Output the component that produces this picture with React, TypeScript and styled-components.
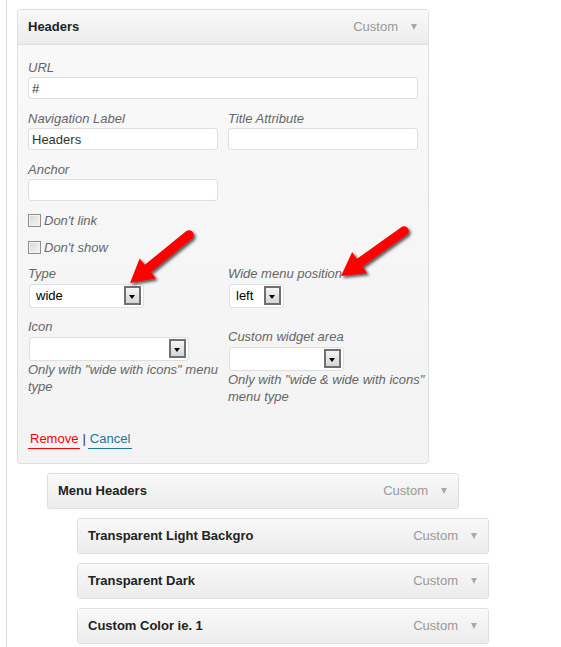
import { createGlobalStyle, styled } from 'styled-components';

const GlobalStyle = createGlobalStyle`
  html, body {
    margin: 0;
    padding: 0;
    background: #fff;
  }
  body {
    font-family: 'Liberation Sans', Arial, sans-serif;
    font-size: 13px;
    color: #333;
  }
`;

type Point = [number, number];

interface ArrowProps {
  tail: Point;
  tip: Point;
}

// red pointer arrow drawn on top of the form, coordinates in page space
const Arrow = ({ tail, tip }: ArrowProps) => {
  const dx = tip[0] - tail[0];
  const dy = tip[1] - tail[1];
  const len = Math.hypot(dx, dy);
  const ux = dx / len;
  const uy = dy / len;
  const headLen = 23;
  const half = 13;
  const bx = tip[0] - ux * headLen;
  const by = tip[1] - uy * headLen;
  const wingA = `${bx - uy * half},${by + ux * half}`;
  const wingB = `${bx + uy * half},${by - ux * half}`;

  return (
    <g filter="url(#arrowShadow)">
      <line
        x1={tail[0]}
        y1={tail[1]}
        x2={bx + ux * 2}
        y2={by + uy * 2}
        stroke="#ff0000"
        strokeWidth={9.5}
        strokeLinecap="round"
      />
      <polygon points={`${tip[0]},${tip[1]} ${wingA} ${wingB}`} fill="#ff0000" />
    </g>
  );
};

interface ItemHeaderProps {
  title: string;
}

const ItemHeader = ({ title }: ItemHeaderProps) => (
  <Header>
    <Title>{title}</Title>
    <ItemType>Custom</ItemType>
    <Toggle />
  </Header>
);

interface SelectProps {
  value?: string;
  width: number;
}

const Select = ({ value, width }: SelectProps) => (
  <SelectBox $width={width}>
    <span>{value}</span>
    <DropButton />
  </SelectBox>
);

const App = () => {
  return (
    <Root>
      <GlobalStyle />
      <Page>
        <Card>
          <ItemHeader title="Headers" />
          <CardBody>
            <Field $width={390}>
              <Label>URL</Label>
              <TextInput $width={390} defaultValue="#" />
            </Field>

            <FieldRow $gap={11}>
              <Field>
                <Label>Navigation Label</Label>
                <TextInput $width={190} defaultValue="Headers" />
              </Field>
              <Field>
                <Label>Title Attribute</Label>
                <TextInput $width={190} />
              </Field>
            </FieldRow>

            <FieldRow $gap={11}>
              <Field>
                <Label>Anchor</Label>
                <TextInput $width={190} />
              </Field>
            </FieldRow>

            <CheckRow $gap={10}>
              <CheckBox />
              <CheckLabel>Don't link</CheckLabel>
            </CheckRow>
            <CheckRow $gap={9}>
              <CheckBox />
              <CheckLabel>Don't show</CheckLabel>
            </CheckRow>

            <FieldRow $gap={9}>
              <Field>
                <Label>Type</Label>
                <Select value="wide" width={115} />
              </Field>
              <Field>
                <Label>Wide menu position</Label>
                <Select value="left" width={55} />
              </Field>
            </FieldRow>

            <FieldRow $gap={10}>
              <Field>
                <Label>Icon</Label>
                <Select width={160} />
                <Help>Only with "wide with icons" menu type</Help>
              </Field>
              <Field $width={200} $offset={10}>
                <Label>Custom widget area</Label>
                <Select width={115} />
                <Help>Only with "wide &amp; wide with icons" menu type</Help>
              </Field>
            </FieldRow>

            <Actions>
              <ActionLink $color="#ff0000">Remove</ActionLink>
              <Separator>|</Separator>
              <ActionLink $color="#21759b">Cancel</ActionLink>
            </Actions>
          </CardBody>
        </Card>

        <Card $depth={1}>
          <ItemHeader title="Menu Headers" />
        </Card>
        <Card $depth={2}>
          <ItemHeader title="Transparent Light Backgro" />
        </Card>
        <Card $depth={2}>
          <ItemHeader title="Transparent Dark" />
        </Card>
        <Card $depth={2}>
          <ItemHeader title="Custom Color ie. 1" />
        </Card>
      </Page>

      <Overlay width={561} height={647}>
        <defs>
          <filter id="arrowShadow" x="-20%" y="-20%" width="150%" height="150%">
            <feDropShadow dx="2" dy="2" stdDeviation="1.4" floodColor="#000" floodOpacity="0.65" />
          </filter>
        </defs>
        <Arrow tail={[189, 235]} tip={[130, 283]} />
        <Arrow tail={[404, 231]} tip={[341, 276]} />
      </Overlay>
    </Root>
  );
};

export default App;

const Root = styled.div`
  position: relative;
  width: 561px;
  height: 647px;
  overflow: hidden;
`;

const Page = styled.div`
  margin-left: 6px;
  border-left: 1px solid #dedede;
  height: 647px;
  box-sizing: border-box;
  padding: 9px 0 0 10px;
`;

const Card = styled.div<{ $depth?: number }>`
  width: 412px;
  box-sizing: border-box;
  margin: 0 0 9px ${({ $depth = 0 }) => $depth * 30}px;
  border: 1px solid #dfdfdf;
  border-radius: 3px;
  background: linear-gradient(#f9f9f9, #f3f3f3);
  overflow: hidden;
`;

const Header = styled.div`
  display: flex;
  align-items: center;
  height: 34px;
  padding: 0 11px 1px 10px;
  box-sizing: border-box;
  background: linear-gradient(#f9f9f9, #ececec);

  & + * {
    border-top: 1px solid #dfdfdf;
  }
`;

const Title = styled.span`
  flex: 1;
  font-weight: bold;
  font-size: 13px;
  color: #222;
  white-space: nowrap;
`;

const ItemType = styled.span`
  font-size: 13px;
  color: #999;
  margin-right: 13px;
`;

const Toggle = styled.span`
  width: 0;
  height: 0;
  border-left: 3.5px solid transparent;
  border-right: 3.5px solid transparent;
  border-top: 6px solid #aaa;
`;

const CardBody = styled.div`
  padding: 14px 10px 14px;
`;

const FieldRow = styled.div<{ $gap: number }>`
  display: flex;
  gap: 10px;
  align-items: flex-start;
  margin-top: ${({ $gap }) => $gap}px;
`;

const Field = styled.div<{ $width?: number; $offset?: number }>`
  display: flex;
  flex-direction: column;
  align-items: flex-start;
  width: ${({ $width = 190 }) => $width}px;
  flex: none;
  margin-top: ${({ $offset = 0 }) => $offset}px;
`;

const Label = styled.label`
  display: block;
  font-style: italic;
  font-size: 13px;
  line-height: 18px;
  color: #666;
`;

const TextInput = styled.input<{ $width: number }>`
  width: ${({ $width }) => $width}px;
  height: 22px;
  box-sizing: border-box;
  border: 1px solid #dfdfdf;
  border-radius: 3px;
  background: #fff;
  padding: 0 3px;
  font-family: 'Liberation Sans', Arial, sans-serif;
  font-size: 13px;
  color: #333;
  outline: none;
`;

const SelectBox = styled.div<{ $width: number }>`
  display: flex;
  align-items: center;
  justify-content: space-between;
  width: ${({ $width }) => $width}px;
  height: 24px;
  box-sizing: border-box;
  margin: 1px 0 0 1px;
  padding: 0 2px 1px 6px;
  border: 1px solid #dfdfdf;
  border-radius: 3px;
  background: #fff;
  font-size: 13px;
  color: #000;
`;

const DropButton = styled.span`
  position: relative;
  width: 17px;
  height: 19px;
  box-sizing: border-box;
  border: 2px solid #707070;
  background: linear-gradient(#f4f4f4, #d6d6d6);

  &::after {
    content: '';
    position: absolute;
    left: 3px;
    top: 7px;
    border-left: 3.5px solid transparent;
    border-right: 3.5px solid transparent;
    border-top: 4px solid #000;
  }
`;

const Help = styled.p`
  margin: 0;
  font-style: italic;
  font-size: 13px;
  line-height: 17px;
  color: #666;
`;

const CheckRow = styled.div<{ $gap: number }>`
  display: flex;
  align-items: center;
  gap: 3px;
  height: 18px;
  margin-top: ${({ $gap }) => $gap}px;
`;

const CheckBox = styled.span`
  width: 13px;
  height: 13px;
  box-sizing: border-box;
  border: 1px solid #8e8e8e;
  background: linear-gradient(135deg, #d8d8d8, #f6f6f6);
  box-shadow: inset 0 0 0 1px #f2f2f2;
`;

const CheckLabel = styled.span`
  font-style: italic;
  font-size: 13px;
  color: #666;
`;

const Actions = styled.div`
  display: flex;
  align-items: flex-start;
  gap: 2px;
  margin-top: 25px;
`;

const ActionLink = styled.a<{ $color: string }>`
  display: inline-block;
  padding: 0 2px;
  font-size: 13px;
  line-height: 18px;
  color: ${({ $color }) => $color};
  border-bottom: 1px solid ${({ $color }) => $color};
  cursor: pointer;
`;

const Separator = styled.span`
  font-size: 13px;
  line-height: 18px;
  color: #333;
`;

const Overlay = styled.svg`
  position: absolute;
  left: 0;
  top: 0;
  pointer-events: none;
`;
